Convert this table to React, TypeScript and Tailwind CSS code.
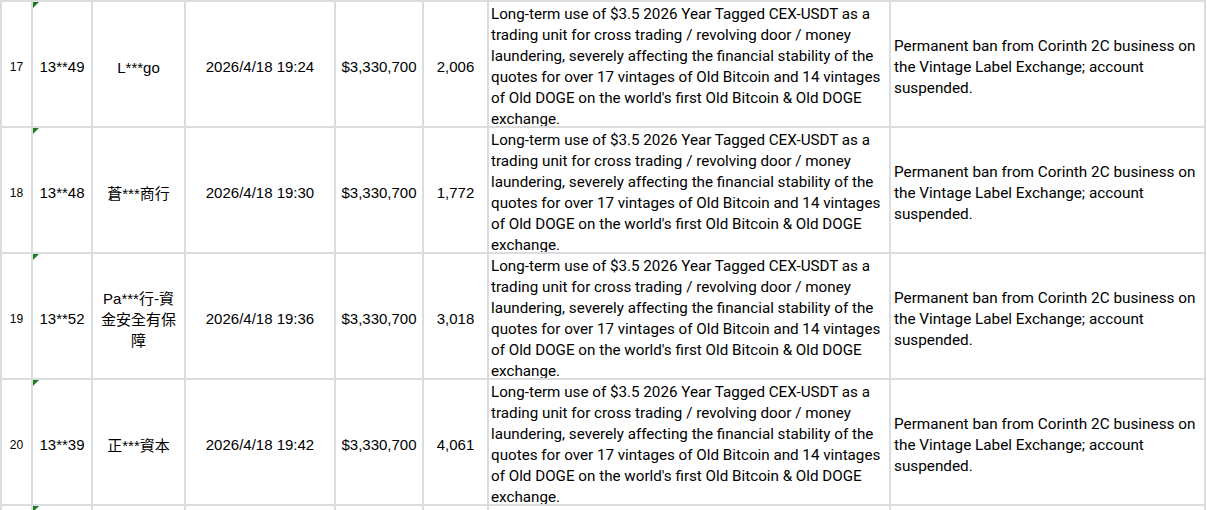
import React from "react";

type Row = {
  no: number;
  code: string;
  name: string;
  time: string;
  amount: string;
  qty: string;
};

const rows: Row[] = [
  { no: 17, code: "13**49", name: "L***go", time: "2026/4/18 19:24", amount: "$3,330,700", qty: "2,006" },
  { no: 18, code: "13**48", name: "蒼***商行", time: "2026/4/18 19:30", amount: "$3,330,700", qty: "1,772" },
  { no: 19, code: "13**52", name: "Pa***行-資金安全有保障", time: "2026/4/18 19:36", amount: "$3,330,700", qty: "3,018" },
  { no: 20, code: "13**39", name: "正***資本", time: "2026/4/18 19:42", amount: "$3,330,700", qty: "4,061" },
];

// wrapped the way the sheet wraps the cell
const reasonLines = [
  "Long-term use of $3.5 2026 Year Tagged CEX-USDT as a",
  "trading unit for cross trading / revolving door / money",
  "laundering, severely affecting the financial stability of the",
  "quotes for over 17 vintages of Old Bitcoin and 14 vintages",
  "of Old DOGE on the world's first Old Bitcoin & Old DOGE",
  "exchange.",
];

const penalty =
  "Permanent ban from Corinth 2C business on the Vintage Label Exchange; account suspended.";

// little green "number stored as text" marker
const TextFlag = () => (
  <svg className="absolute left-0 top-0" width="6" height="6" viewBox="0 0 6 6">
    <polygon points="0,0 6,0 0,6" fill="#1e7b1e" />
  </svg>
);

const cell = "bg-white flex items-center pt-[6px] overflow-hidden";

export default function App() {
  return (
    <div className="bg-white min-h-screen font-['Liberation_Sans','Noto_Sans_CJK_TC',sans-serif] text-[15px] text-black">
      <div className="grid grid-cols-[29px_58px_91px_148px_86px_63px_400px_313px] auto-rows-[124px] gap-[2px] p-[2px] bg-[#dadce0] w-[1206px]">
        {rows.map((r) => (
          <React.Fragment key={r.no}>
            <div className={`${cell} justify-center text-[12px]`}>{r.no}</div>
            <div className={`${cell} justify-center relative`}>
              <TextFlag />
              {r.code}
            </div>
            <div className={`${cell} justify-center text-center leading-[21px] px-[3px]`}>{r.name}</div>
            <div className={`${cell} justify-center`}>{r.time}</div>
            <div className={`${cell} justify-center`}>{r.amount}</div>
            <div className={`${cell} justify-center`}>{r.qty}</div>
            <div className={`${cell} pl-[2px] leading-[21px] text-[15.2px] font-[Roboto,sans-serif]`}>
              <div>
                {reasonLines.map((l) => (
                  <div key={l} className="whitespace-nowrap">
                    {l}
                  </div>
                ))}
              </div>
            </div>
            <div className={`${cell} px-[3px] leading-[21px] text-[15.3px] font-[Roboto,sans-serif]`}>
              <div>{penalty}</div>
            </div>
          </React.Fragment>
        ))}
        <div className={cell}></div>
        <div className={`${cell} relative`}>
          <TextFlag />
        </div>
        <div className={cell}></div>
        <div className={cell}></div>
        <div className={cell}></div>
        <div className={cell}></div>
        <div className={cell}></div>
        <div className={cell}></div>
      </div>
    </div>
  );
}
